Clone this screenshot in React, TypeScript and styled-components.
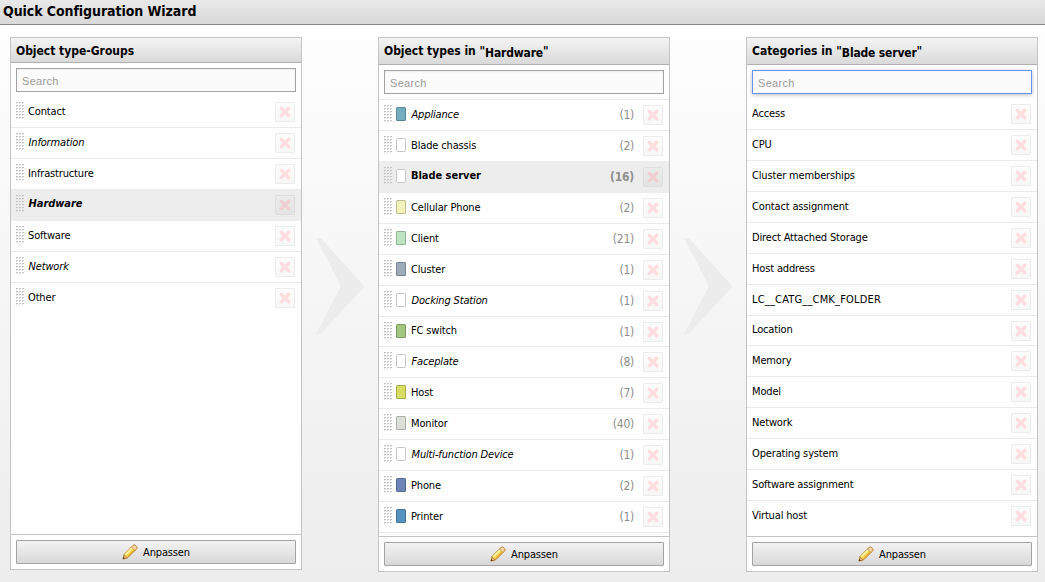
import React from "react";
import styled, { createGlobalStyle, css } from "styled-components";

const GlobalStyle = createGlobalStyle`
  * { box-sizing: border-box; }
  body {
    margin: 0;
    overflow: hidden;
    font-family: "DejaVu Sans Condensed", Tahoma, Verdana, sans-serif;
    font-size: 11px;
    color: #000;
  }
`;

const Page = styled.div`
  width: 1045px;
  height: 582px;
  display: flex;
  flex-direction: column;
  background: linear-gradient(#fefefe 24px, #ededed 570px);
`;

const TitleBar = styled.h1`
  margin: 0;
  height: 25px;
  flex: none;
  padding-left: 3px;
  border-bottom: 1px solid #888;
  background: linear-gradient(#e9e9e9, #d9d9d9);
  font-size: 14px;
  line-height: 23px;
  letter-spacing: -0.07px;
`;

const Columns = styled.main`
  display: flex;
  align-items: flex-start;
  padding: 12px 0 0 10px;
`;

const Panel = styled.section<{ $height: number }>`
  width: 292px;
  height: ${(p) => p.$height}px;
  flex: none;
  display: flex;
  flex-direction: column;
  border: 1px solid #c4c4c4;
  background: #fff;
`;

const PanelHeader = styled.h2<{ $height: number }>`
  margin: 0;
  height: ${(p) => p.$height}px;
  flex: none;
  padding: 1px 0 0 5px;
  border-bottom: 1px solid #b0b0b0;
  background: linear-gradient(#f4f4f4, #d9d9d9);
  font-size: 12px;
  line-height: 25px;
  letter-spacing: -0.02px;
  white-space: nowrap;
`;

const Subject = styled.span`
  position: relative;
  top: 2px;
  letter-spacing: -0.17px;
`;

const SearchField = styled.input<{ $focused?: boolean }>`
  flex: none;
  height: 24px;
  margin: 5px 5px 0;
  padding: 2px 5px 0;
  border: 1px solid #a3a3a3;
  border-radius: 0;
  outline: none;
  background: #fbfbfb;
  font-family: "Liberation Sans", Arial, sans-serif;
  font-size: 11px;
  letter-spacing: 0.3px;
  box-shadow: inset 0 1px 2px #eee;
  &::placeholder { color: #9a9a9a; opacity: 1; }
  ${(p) =>
    p.$focused &&
    css`
      border-color: #6593ee;
      box-shadow: 0 1px 4px #bbb;
    `}
`;

const List = styled.ul<{ $ruled?: boolean }>`
  flex: 1;
  min-height: 0;
  margin: 5px 0 0;
  padding: 0;
  list-style: none;
  overflow: hidden;
  border-top: ${(p) => (p.$ruled ? "1px solid #ebebeb" : "0")};
`;

const Row = styled.li<{ $selected?: boolean; $short?: boolean; $last?: boolean }>`
  display: flex;
  align-items: flex-start;
  height: ${(p) => (p.$short ? 30 : 31)}px;
  margin-top: ${(p) => (p.$selected ? -1 : 0)}px;
  padding: 5px 6px 0 5px;
  border-bottom: 1px solid ${(p) => (p.$last ? "transparent" : "#ebebeb")};
  ${(p) =>
    p.$selected &&
    css`
      height: 32px;
      padding-top: 6px;
      background: #ededed;
      border-color: #ededed;
      font-weight: bold;
    `}
`;

const Handle = styled.svg`
  flex: none;
  width: 8px;
  height: 17px;
  margin-right: 4px;
`;

const Swatch = styled.span<{ $color: string }>`
  flex: none;
  width: 10px;
  height: 14px;
  margin: 2px 5px 0 0;
  border: 1px solid ${(p) => (p.$color === "#fff" ? "#c6c6c6" : "rgba(0, 0, 0, 0.22)")};
  border-radius: 1.5px;
  background: ${(p) => p.$color};
  background-clip: border-box;
`;

interface LabelProps {
  $italic?: boolean;
  $selected?: boolean;
  $wide?: boolean;
  $short?: boolean;
}

const labelSpacing = (p: LabelProps) => {
  if (p.$wide) return 0.18;
  if (p.$selected) return -0.04;
  return -0.15;
};

const Label = styled.span<LabelProps>`
  flex: 1;
  margin-top: ${(p) => (p.$selected || p.$short ? 2 : 3)}px;
  padding-left: ${(p) => (p.$italic ? 0.5 : 0)}px;
  line-height: 14px;
  letter-spacing: ${labelSpacing}px;
  white-space: nowrap;
  font-style: ${(p) => (p.$italic ? "italic" : "normal")};
`;

const Count = styled.span`
  margin: 3px 9px 0 0;
  line-height: 14px;
  color: #8e8e8e;
  font-size: 12px;
  letter-spacing: -0.25px;
`;

const DeleteButton = styled.button<{ $selected?: boolean }>`
  flex: none;
  width: 20px;
  height: 20px;
  padding: 0;
  display: flex;
  align-items: center;
  justify-content: center;
  border: 1px solid ${(p) => (p.$selected ? "#dedede" : "#ececec")};
  border-radius: 1px;
  background: ${(p) => (p.$selected ? "linear-gradient(#ebebeb, #e4e4e4)" : "linear-gradient(#fcfcfc, #f7f7f7)")};
  color: ${(p) => (p.$selected ? "#efcfd1" : "#fddde0")};
`;

const Footer = styled.footer`
  flex: none;
  height: 35px;
  padding: 5px;
  border-top: 1px solid #c4c4c4;
`;

const AdjustButton = styled.button`
  width: 100%;
  height: 24px;
  padding: 0;
  display: flex;
  align-items: center;
  justify-content: center;
  gap: 5px;
  border: 1px solid #a3a3a3;
  border-radius: 1px;
  background: linear-gradient(#f3f3f3, #d8d8d8);
  font: inherit;
  letter-spacing: -0.15px;
  color: #000;
`;

const Chevron = styled.svg`
  flex: none;
  width: 76px;
  height: 98px;
  margin-top: 200px;
`;

const dotRows = [0, 3, 6, 9, 12, 15];

const DragHandle = () => (
  <Handle viewBox="0 0 8 17" shapeRendering="crispEdges">
    {dotRows.map((y) =>
      [0, 3, 6].map((x) => (
        <g key={`${x}-${y}`}>
          <rect x={x} y={y} width="2" height="1" fill="#c4c4c4" />
          <rect x={x} y={y + 1} width="1" height="1" fill="#dedede" />
        </g>
      ))
    )}
  </Handle>
);

const Cross = () => (
  <svg width="12" height="12" viewBox="0 0 12 12" fill="none" stroke="currentColor" strokeWidth="3.4" strokeLinecap="round">
    <path d="M2.3 2.3 9.7 9.7M9.7 2.3 2.3 9.7" />
  </svg>
);

const Pencil = () => (
  <svg width="16" height="16" viewBox="0 0 16 16" strokeLinejoin="round">
    <path d="M1 15 2.2 10.3 10.6 1.9Q11.7 .8 13 1L15 3Q15.2 4.3 14.1 5.4L5.7 13.8Z" fill="#f6d44e" stroke="#b97f2c" strokeWidth="1" />
    <path d="M3.3 10.8 11 3.1" stroke="#fdf2a4" strokeWidth="1.8" />
    <path d="M5.3 12.8 13 5.1" stroke="#e5a72e" strokeWidth="1" />
    <path d="M10.6 1.9Q11.7 .8 13 1L15 3Q15.2 4.3 14.1 5.4L12.9 6.4 9.6 3.1Z" fill="#f3d6a8" stroke="#c28b43" strokeWidth=".8" />
    <path d="M1.4 14.6 2.3 11.2 4.8 13.7Z" fill="#efcf9c" stroke="#9c6424" strokeWidth=".6" />
    <path d="M.7 15.3 1.3 13 3 14.7Z" fill="#5b3a18" />
  </svg>
);

const Arrow = () => (
  <Chevron viewBox="0 0 76 98">
    <path d="M14 1H18.5L62.5 49.5 18.5 97H14L39 49Z" fill="#ececec" />
  </Chevron>
);

interface Item {
  name: string;
  italic?: boolean;
  selected?: boolean;
  short?: boolean;
  wide?: boolean;
  color?: string;
  count?: number;
}

const groups: Item[] = [
  { name: "Contact" },
  { name: "Information", italic: true },
  { name: "Infrastructure" },
  { name: "Hardware", italic: true, selected: true },
  { name: "Software" },
  { name: "Network", italic: true },
  { name: "Other" },
];

const types: Item[] = [
  { name: "Appliance", italic: true, color: "#74adbf", count: 1 },
  { name: "Blade chassis", color: "#fff", count: 2 },
  { name: "Blade server", color: "#fff", count: 16, selected: true },
  { name: "Cellular Phone", color: "#f2f3b9", count: 2 },
  { name: "Client", color: "#bce4c1", count: 21 },
  { name: "Cluster", color: "#9fabb8", count: 1 },
  { name: "Docking Station", italic: true, color: "#fff", count: 1 },
  { name: "FC switch", color: "#a2c580", count: 1, short: true },
  { name: "Faceplate", italic: true, color: "#fff", count: 8 },
  { name: "Host", color: "#d7de62", count: 7 },
  { name: "Monitor", color: "#dce0d8", count: 40 },
  { name: "Multi-function Device", italic: true, color: "#fff", count: 1 },
  { name: "Phone", color: "#6d86b7", count: 2 },
  { name: "Printer", color: "#5692c0", count: 1 },
];

const categories: Item[] = [
  { name: "Access" },
  { name: "CPU" },
  { name: "Cluster memberships" },
  { name: "Contact assignment" },
  { name: "Direct Attached Storage" },
  { name: "Host address" },
  { name: "LC__CATG__CMK_FOLDER", wide: true },
  { name: "Location", short: true },
  { name: "Memory" },
  { name: "Model" },
  { name: "Network" },
  { name: "Operating system" },
  { name: "Software assignment" },
  { name: "Virtual host" },
];

interface ColumnProps {
  title: React.ReactNode;
  items: Item[];
  height: number;
  headerHeight: number;
  draggable?: boolean;
  ruled?: boolean;
  focused?: boolean;
  openEnd?: boolean;
}

const Column = ({ title, items, height, headerHeight, draggable, ruled, focused, openEnd }: ColumnProps) => (
  <Panel $height={height}>
    <PanelHeader $height={headerHeight}>{title}</PanelHeader>
    <SearchField placeholder="Search" $focused={focused} />
    <List $ruled={ruled}>
      {items.map((item, i) => (
        <Row
          key={item.name}
          $selected={item.selected}
          $short={item.short}
          $last={openEnd && i === items.length - 1}
        >
          {draggable && <DragHandle />}
          {item.color && <Swatch $color={item.color} />}
          <Label $italic={item.italic} $selected={item.selected} $wide={item.wide} $short={item.short}>
            {item.name}
          </Label>
          {item.count !== undefined && <Count>({item.count})</Count>}
          <DeleteButton $selected={item.selected} aria-label="Delete">
            <Cross />
          </DeleteButton>
        </Row>
      ))}
    </List>
    <Footer>
      <AdjustButton>
        <Pencil />
        Anpassen
      </AdjustButton>
    </Footer>
  </Panel>
);

const App = () => (
  <>
    <GlobalStyle />
    <Page>
      <TitleBar>Quick Configuration Wizard</TitleBar>
      <Columns>
        <Column title="Object type-Groups" items={groups} height={533} headerHeight={25} draggable openEnd />
        <Arrow />
        <Column
          title={<>Object types in "<Subject>Hardware</Subject>"</>}
          items={types}
          height={535}
          headerHeight={27}
          draggable
          ruled
        />
        <Arrow />
        <Column
          title={<>Categories in "<Subject>Blade server</Subject>"</>}
          items={categories}
          height={535}
          headerHeight={27}
          focused
          openEnd
        />
      </Columns>
    </Page>
  </>
);

export default App;
